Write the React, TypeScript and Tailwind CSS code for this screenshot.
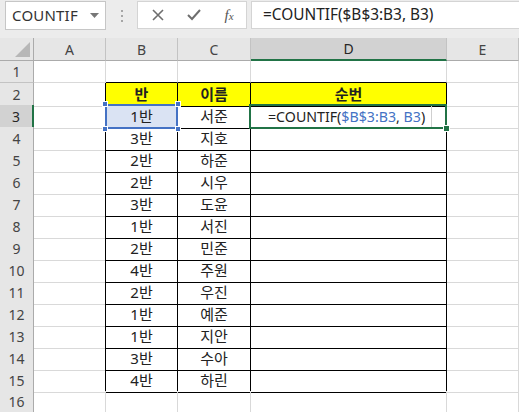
import React from "react";

const FONT = "font-['Noto_Sans','Noto_Sans_CJK_KR',sans-serif]";

const classes = ["1반", "3반", "2반", "2반", "3반", "1반", "2반", "4반", "2반", "1반", "1반", "3반", "4반"];
const names = ["서준", "지호", "하준", "시우", "도윤", "서진", "민준", "주원", "우진", "예준", "지안", "수아", "하린"];

function Toolbar() {
  return (
    <div className="h-[38px] bg-[#ececec] flex items-start pt-[1px] pl-[5px] pr-0">
      {/* Name box */}
      <div className="w-[101px] h-[29px] bg-white border border-[#c6c6c6] flex items-center pl-[6px] pr-[6px]">
        <span className="flex-1 text-[15px] text-[#333] tracking-[0.2px]">COUNTIF</span>
        <svg width="9" height="5" viewBox="0 0 9 5">
          <path d="M0 0 L9 0 L4.5 5 Z" fill="#777" />
        </svg>
      </div>
      {/* grip dots */}
      <div className="w-[31px] h-[29px] flex flex-col items-center justify-center gap-[3px]">
        <span className="w-[2px] h-[2px] bg-[#a6a6a6]" />
        <span className="w-[2px] h-[2px] bg-[#a6a6a6]" />
        <span className="w-[2px] h-[2px] bg-[#a6a6a6]" />
      </div>
      {/* buttons */}
      <div className="w-[110px] h-[28px] bg-white border border-[#d4d4d4] flex items-center">
        <div className="w-[38px] flex justify-center pl-[2px]">
          <svg width="12" height="12" viewBox="0 0 12 12">
            <path d="M1 1 L11 11 M11 1 L1 11" stroke="#6e6e6e" strokeWidth="1.6" />
          </svg>
        </div>
        <div className="w-[36px] flex justify-center">
          <svg width="14" height="12" viewBox="0 0 14 12">
            <path d="M1 6 L5 10 L13 1" stroke="#6e6e6e" strokeWidth="2" fill="none" />
          </svg>
        </div>
        <div className="w-[34px] flex justify-center">
          <span className="font-['Liberation_Serif',serif] italic text-[15px] text-[#555] leading-none">
            f<span className="text-[11px]">x</span>
          </span>
        </div>
      </div>
      {/* formula input */}
      <div className="flex-1 ml-[4px] h-[28px] bg-white border-l border-t border-b border-[#d4d4d4] flex items-center pl-[11px]">
        <span className="text-[15.4px] text-[#222]">=COUNTIF($B$3:B3, B3)</span>
      </div>
    </div>
  );
}

const COLS = "grid grid-cols-[34px_72px_72px_73px_196px_1fr]";

function HeaderRow() {
  const letters = ["A", "B", "C", "D", "E"];
  return (
    <div className={`${COLS} h-[23px] bg-[#e6e6e6]`}>
      <div className="border-r border-b border-[#ababab] relative flex items-end justify-end pr-[3px] pb-[3px]">
        <svg width="15" height="15" viewBox="0 0 15 15">
          <path d="M15 0 L15 15 L0 15 Z" fill="#b7b7b7" />
        </svg>
      </div>
      {letters.map((l) =>
        l === "D" ? (
          <div
            key={l}
            className="bg-[#d2d2d2] border-r border-r-[#c3c3c3] border-b-2 border-b-[#217346] flex items-center justify-center text-[14px] text-[#262626]"
          >
            {l}
          </div>
        ) : (
          <div
            key={l}
            className="border-r border-r-[#c3c3c3] border-b border-b-[#ababab] flex items-center justify-center text-[14px] text-[#444]"
          >
            {l}
          </div>
        )
      )}
    </div>
  );
}

function RowHeader({ n }: { n: number }) {
  if (n === 3) {
    return (
      <div className="bg-[#d2d2d2] border-r-2 border-r-[#217346] border-b border-b-[#c3c3c3] flex items-center justify-center text-[14px] text-[#262626]">
        {n}
      </div>
    );
  }
  return (
    <div className="bg-[#e6e6e6] border-r border-r-[#ababab] border-b border-b-[#c3c3c3] flex items-center justify-center text-[14px] text-[#444]">
      {n}
    </div>
  );
}

function Handle({ className }: { className: string }) {
  return <span className={`absolute w-[6px] h-[6px] bg-[#4472c4] border border-white ${className}`} />;
}

function Row({ n }: { n: number }) {
  const inTable = n >= 2 && n <= 15;
  const grid = "border-[#d9d9d9]";
  const aRight = inTable ? "border-r-black" : "border-r-[#d9d9d9]";
  const tBottom = n >= 1 && n <= 15 ? "border-b-black" : "border-b-[#d9d9d9]";
  const tRight = inTable ? "border-r-black" : "border-r-[#d9d9d9]";
  const yellow = n === 2 ? "bg-[#ffff00] font-bold" : "";
  const b = n === 2 ? "반" : n >= 3 ? classes[n - 3] : "";
  const c = n === 2 ? "이름" : n >= 3 ? names[n - 3] : "";
  const d = n === 2 ? "순번" : "";

  return (
    <div className={`${COLS} h-[22px] text-[15px] text-[#222]`}>
      <RowHeader n={n} />
      <div className={`border-b border-r ${grid} ${aRight}`} />
      {n === 3 ? (
        <div className={`relative border-b border-r ${tBottom} ${tRight} bg-[#dae3f3] flex items-center justify-center`}>
          <div className="absolute -left-[1px] -top-[1px] -right-[1px] -bottom-[1px] border-2 border-[#4472c4]" />
          <Handle className="-left-[4px] -top-[4px]" />
          <Handle className="-right-[4px] -top-[4px]" />
          <Handle className="-left-[4px] -bottom-[4px]" />
          <Handle className="-right-[4px] -bottom-[4px]" />
          <span className="relative">{b}</span>
        </div>
      ) : (
        <div className={`border-b border-r ${grid} ${tBottom} ${tRight} ${yellow} flex items-center justify-center`}>{b}</div>
      )}
      <div className={`border-b border-r ${grid} ${tBottom} ${tRight} ${yellow} flex items-center justify-center`}>{c}</div>
      {n === 3 ? (
        <div className={`relative border-b border-r ${tBottom} ${tRight} flex items-center pl-[17px]`}>
          <div className="absolute -left-[2px] -top-[1px] -right-[1px] -bottom-[1px] border-2 border-[#217346]" />
          <span className="absolute right-[14px] top-[1px] bottom-[1px] w-[1px] bg-[#cfcfcf]" />
          <span className="absolute -right-[4px] -bottom-[4px] w-[7px] h-[7px] bg-[#217346] border border-white" />
          <span className="relative text-[14.2px]">
            =COUNTIF(<span className="text-[#4472c4]">$B$3:B3</span>, <span className="text-[#4472c4]">B3</span>)
          </span>
        </div>
      ) : (
        <div className={`border-b border-r ${grid} ${tBottom} ${tRight} ${yellow} flex items-center justify-center`}>{d}</div>
      )}
      <div className={`border-b border-r ${grid}`} />
    </div>
  );
}

export default function App() {
  const rows = Array.from({ length: 16 }, (_, i) => i + 1);
  return (
    <div className={`w-[519px] h-[412px] overflow-hidden bg-white ${FONT}`}>
      <Toolbar />
      <HeaderRow />
      {rows.map((n) => (
        <Row key={n} n={n} />
      ))}
    </div>
  );
}
